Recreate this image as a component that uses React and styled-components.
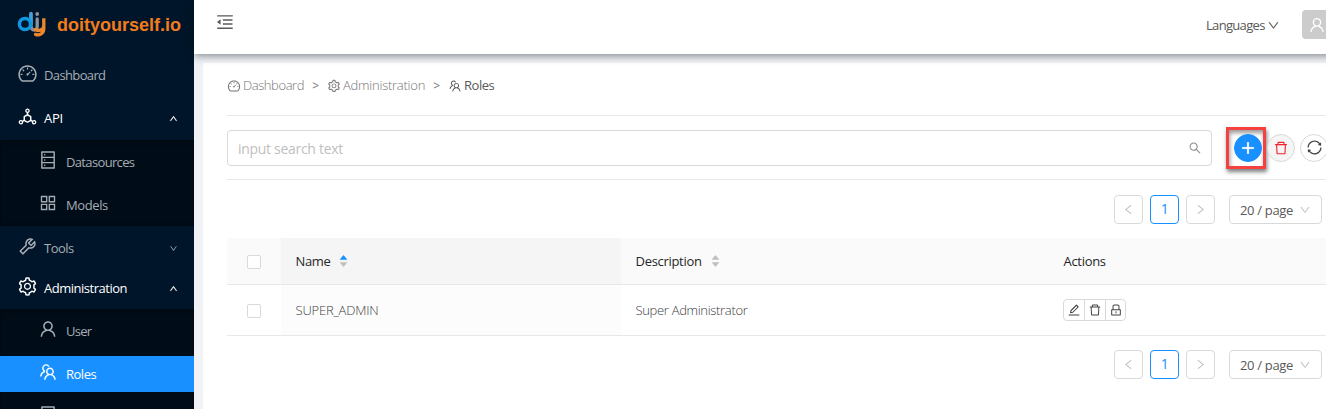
import React from "react";
import styled, { createGlobalStyle, css } from "styled-components";
import {
  AiOutlineDashboard, AiOutlineDeploymentUnit, AiOutlineDatabase, AiOutlineAppstore,
  AiOutlineTool, AiOutlineSetting, AiOutlineUser, AiOutlineTeam, AiOutlineMenuFold,
  AiOutlineSearch, AiOutlinePlus, AiOutlineDelete, AiOutlineSync, AiOutlineEdit,
  AiOutlineLock, AiOutlineDown, AiOutlineUp, AiOutlineLeft, AiOutlineRight,
  AiFillCaretUp, AiFillCaretDown,
} from "react-icons/ai";

const GlobalStyle = createGlobalStyle`
  * { box-sizing: border-box; }
  html, body { margin: 0; overflow: hidden; }
  body { font-family: "Open Sans", "Noto Sans", sans-serif; font-size: 13px; color: #595959; background: #f0f2f5; }
  svg { display: block; flex: none; }
`;

const Page = styled.div`
  display: flex;
  width: 1326px;
  height: 409px;
  overflow: hidden;
`;

/* Sidebar */
const Sidebar = styled.aside`
  flex: none;
  width: 194px;
  height: 409px;
  background: #001529;
  overflow: hidden;
`;
const Brand = styled.div`
  display: flex;
  align-items: center;
  height: 52px;
  padding-left: 17px;
  gap: 11px;
  > svg { margin-top: -3px; }
`;
const BrandName = styled.span`
  font: bold 18px/24px "Liberation Sans", sans-serif;
  color: #f07c1c;
  padding-bottom: 2px;
`;
const MenuItem = styled.div`
  display: flex;
  align-items: center;
  height: ${(p) => (p.$nested ? 36 : 40)}px;
  margin: ${(p) => (p.$nested ? "0 0 7px" : 0)};
  padding: 0 16px 0 ${(p) => (p.$nested ? 38 : 16.5)}px;
  color: ${(p) => (p.$active ? "#fff" : "#a6adb4")};
  ${(p) => p.$selected && css`background: #1890ff; color: #fff;`}
  > svg:first-child { transform: translateY(-2px); }
`;
const MenuLabel = styled.span`
  flex: 1;
  margin-left: ${(p) => (p.$nested ? 8 : 6.5)}px;
  letter-spacing: ${(p) => p.$track}px;
  white-space: nowrap;
`;
const SubMenu = styled.div`
  background: #000c17;
  box-shadow: inset 0 5px 5px -4px rgba(0, 0, 0, 0.45), inset 0 -4px 4px -4px rgba(0, 0, 0, 0.3);
  margin-top: ${(p) => p.$top}px;
  height: ${(p) => p.$height}px;
  padding-top: 4px;
  overflow: hidden;
`;
const Spacer = styled.div`height: ${(p) => p.$size}px;`;

/* Main column */
const Main = styled.main`
  flex: none;
  width: 1150px;
  display: flex;
  flex-direction: column;
`;
const Header = styled.header`
  display: flex;
  align-items: center;
  flex: none;
  height: 54px;
  padding-left: 21px;
  background: #fff;
  box-shadow: 0 2px 8px rgba(0, 10, 20, 0.45);
  z-index: 1;
  > svg { margin-top: -10px; }
`;
const Languages = styled.div`
  display: flex;
  align-items: center;
  gap: 2px;
  width: 96px;
  margin: -4px 0 0 971px;
  letter-spacing: -0.68px;
`;
const Avatar = styled.div`
  display: flex;
  align-items: center;
  justify-content: center;
  flex: none;
  width: 29px;
  height: 29px;
  margin-top: -5px;
  border-radius: 4px;
  background: #ccc;
  color: #fff;
`;
const Card = styled.section`
  margin: 9px 0 0 9px;
  padding: 0 24px;
  flex: 1;
  background: #fff;
`;
const Inner = styled.div`width: 1102px;`;
const Breadcrumb = styled.nav`
  display: flex;
  align-items: center;
  height: 46px;
  padding-bottom: 2px;
`;
const Crumb = styled.span`
  display: flex;
  align-items: center;
  gap: 2.5px;
  font-weight: ${(p) => (p.$current ? 400 : 300)};
  color: ${(p) => (p.$current ? "#595959" : "#757575")};
  letter-spacing: ${(p) => p.$track}px;
  > svg { margin: 1px 0 0 -0.5px; }
`;
const Separator = styled.span`
  width: 23px;
  text-align: center;
  font-size: 12px;
  color: #757575;
`;
const SearchRow = styled.div`
  display: flex;
  align-items: center;
  height: 65px;
  margin-top: 6px;
  border: solid #e8e8e8;
  border-width: 1px 0;
`;
const SearchBox = styled.div`
  display: flex;
  align-items: center;
  justify-content: space-between;
  flex: none;
  width: 985px;
  height: 36px;
  padding: 1px 9px 0 10px;
  border: 1px solid #d9d9d9;
  border-radius: 4px;
  color: #bfbfbf;
  font-size: 14px;
  letter-spacing: -0.3px;
  > svg { margin-top: -1px; }
`;
const Highlight = styled.div`
  display: flex;
  align-items: center;
  justify-content: center;
  flex: none;
  width: 40px;
  height: 42px;
  margin: 0 1px 0 14px;
  border: 3px solid #f5413f;
  box-shadow: 1px 3px 4px rgba(0, 0, 0, 0.5), inset 1px 3px 4px rgba(0, 0, 0, 0.4);
`;
const RoundButton = styled.button`
  display: flex;
  align-items: center;
  justify-content: center;
  flex: none;
  width: 28px;
  height: 28px;
  padding: 0;
  margin-right: 5px;
  border: 1px solid ${(p) => p.$border || "#d9d9d9"};
  border-radius: 50%;
  background: ${(p) => p.$bg || "#fff"};
  color: ${(p) => p.$color || "#434343"};
  ${Highlight} & { margin: 0 0 0 4px; }
`;
const Pager = styled.div`
  display: flex;
  justify-content: flex-end;
  gap: 7px;
  height: 29px;
  margin: ${(p) => p.$top}px 7px 0 0;
`;
const PageButton = styled.span`
  display: flex;
  align-items: center;
  justify-content: center;
  width: ${(p) => (p.$wide ? 93 : 29)}px;
  gap: 6px;
  margin-left: ${(p) => (p.$wide ? 7 : 0)}px;
  height: 29px;
  border: 1px solid ${(p) => (p.$current ? "#1890ff" : "#d9d9d9")};
  border-radius: 4px;
  font-size: ${(p) => (p.$current ? 14 : 13)}px;
  letter-spacing: -0.32px;
  color: ${(p) => (p.$current ? "#1890ff" : p.$wide ? "#595959" : "#bfbfbf")};
  padding-bottom: ${(p) => (p.$current ? 3 : 0)}px;
  > svg { color: #bfbfbf; }
`;
const TableRow = styled.div`
  display: grid;
  grid-template-columns: 54px 340px 428px 1fr;
  height: ${(p) => (p.$head ? 47 : 51)}px;
  border-bottom: 1px solid #e8e8e8;
  background: ${(p) => (p.$head ? "#fafafa" : "#fff")};
  color: ${(p) => (p.$head ? "#262626" : "#3c3c3c")};
  font-weight: ${(p) => (p.$head ? 400 : 300)};
`;
const Table = styled.div`
  margin-top: 14px;
  border-radius: 4px 0 0 0;
  overflow: hidden;
`;
const Cell = styled.div`
  display: flex;
  align-items: center;
  padding: ${(p) => (p.$check ? 1 : 0)}px 0 0 ${(p) => (p.$check ? 20 : 14.5)}px;
  background: ${(p) => p.$bg || "transparent"};
  letter-spacing: ${(p) => p.$track || 0}px;
`;
const Checkbox = styled.span`
  width: 14px;
  height: 14px;
  border: 1px solid #d9d9d9;
  border-radius: 2px;
  background: #fff;
`;
const Sorter = styled.span`
  margin-left: 8px;
  color: #bfbfbf;
  > svg + svg { margin-top: -4px; }
  > svg:first-child { color: ${(p) => (p.$asc ? "#1890ff" : "#bfbfbf")}; }
`;
const ActionGroup = styled.div`
  display: flex;
  height: 22px;
  margin-left: -0.5px;
  border: 1px solid #d9d9d9;
  border-radius: 4px;
  color: #434343;
`;
const Action = styled.span`
  display: flex;
  align-items: center;
  justify-content: center;
  width: 20px;
  & + & { width: 21px; border-left: 1px solid #d9d9d9; }
  & + &:last-child { width: 20px; }
`;

const Logo = () => (
  <svg width="29" height="28" viewBox="0 0 29 28" fill="none" strokeLinecap="round">
    <path d="M14 2.500V14c0 3.500 1 5 3.500 5 1.800 0 2.700-1.300 2.700-3.500V8" stroke="#8d9299" strokeWidth="3.300" />
    <circle cx="20.200" cy="3" r="1.900" fill="#8d9299" />
    <path d="M14 2.800v9.700" stroke="#38a3df" strokeWidth="3.300" />
    <circle cx="8" cy="13" r="5.600" stroke="#0f97e2" strokeWidth="3.500" />
    <path d="M18.500 18.600c1.800 1.600 8.300 1.200 8.300-4V7.300v10.200c0 5-4.300 7.300-8.300 5.900" stroke="#f0862c" strokeWidth="3.300" />
  </svg>
);

const Item = ({ icon: Icon, label, nested, track = -0.5, open, closed, active, selected }) => (
  <MenuItem $nested={nested} $active={active} $selected={selected}>
    <Icon size={nested ? 20 : 21} />
    <MenuLabel $nested={nested} $track={track}>{label}</MenuLabel>
    {open && <AiOutlineUp size={9} stroke="currentColor" strokeWidth="40" />}
    {closed && <AiOutlineDown size={9} />}
  </MenuItem>
);

const Pagination = ({ top }) => (
  <Pager $top={top}>
    <PageButton><AiOutlineLeft size={13} /></PageButton>
    <PageButton $current>1</PageButton>
    <PageButton><AiOutlineRight size={13} /></PageButton>
    <PageButton $wide>20 / page<AiOutlineDown size={12} /></PageButton>
  </Pager>
);

export default function App() {
  return (
    <Page>
      <GlobalStyle />
      <Sidebar>
        <Brand><Logo /><BrandName>doityourself.io</BrandName></Brand>
        <Spacer $size={3} />
        <Item icon={AiOutlineDashboard} label="Dashboard" track={-0.63} />
        <Spacer $size={3} />
        <Item icon={AiOutlineDeploymentUnit} label="API" track={-0.3} active open />
        <SubMenu $top={2} $height={86}>
          <Item nested icon={AiOutlineDatabase} label="Datasources" track={-0.65} />
          <Item nested icon={AiOutlineAppstore} label="Models" track={-0.4} />
        </SubMenu>
        <Spacer $size={2} />
        <Item icon={AiOutlineTool} label="Tools" closed />
        <Item icon={AiOutlineSetting} label="Administration" track={-0.48} active open />
        <SubMenu $top={1} $height={130}>
          <Item nested icon={AiOutlineUser} label="User" track={-0.7} />
          <Item nested icon={AiOutlineTeam} label="Roles" selected />
          <Item nested icon={AiOutlineDatabase} label="" />
        </SubMenu>
      </Sidebar>
      <Main>
        <Header>
          <AiOutlineMenuFold size={20} />
          <Languages>Languages<AiOutlineDown size={13} /></Languages>
          <Avatar><AiOutlineUser size={18} /></Avatar>
        </Header>
        <Card>
          <Inner>
            <Breadcrumb>
              <Crumb $track={-0.42}><AiOutlineDashboard size={14} />Dashboard</Crumb>
              <Separator>&gt;</Separator>
              <Crumb $track={-0.25}><AiOutlineSetting size={14} />Administration</Crumb>
              <Separator>&gt;</Separator>
              <Crumb $current $track={-0.5}><AiOutlineTeam size={14} />Roles</Crumb>
            </Breadcrumb>
            <SearchRow>
              <SearchBox>input search text<AiOutlineSearch size={14} color="#8c8c8c" /></SearchBox>
              <Highlight>
                <RoundButton $bg="#1890ff" $border="#1890ff" $color="#fff"><AiOutlinePlus size={16} stroke="#fff" strokeWidth="50" /></RoundButton>
              </Highlight>
              <RoundButton $bg="#f5f5f5" $color="#f5222d"><AiOutlineDelete size={16} /></RoundButton>
              <RoundButton><AiOutlineSync size={17} /></RoundButton>
            </SearchRow>
            <Pagination top={15} />
            <Table>
              <TableRow $head>
                <Cell $check><Checkbox /></Cell>
                <Cell $bg="#f5f5f5" $track={-0.35}>Name<Sorter $asc><AiFillCaretUp size={11} /><AiFillCaretDown size={11} /></Sorter></Cell>
                <Cell $track={-0.3}>Description<Sorter><AiFillCaretUp size={11} /><AiFillCaretDown size={11} /></Sorter></Cell>
                <Cell $track={-0.3}>Actions</Cell>
              </TableRow>
              <TableRow>
                <Cell $check><Checkbox /></Cell>
                <Cell $bg="#fcfcfc" $track={-0.2}>SUPER_ADMIN</Cell>
                <Cell $track={-0.32}>Super Administrator</Cell>
                <Cell>
                  <ActionGroup>
                    <Action><AiOutlineEdit size={14} /></Action>
                    <Action><AiOutlineDelete size={14} /></Action>
                    <Action><AiOutlineLock size={14} /></Action>
                  </ActionGroup>
                </Cell>
              </TableRow>
            </Table>
            <Pagination top={14} />
          </Inner>
        </Card>
      </Main>
    </Page>
  );
}
